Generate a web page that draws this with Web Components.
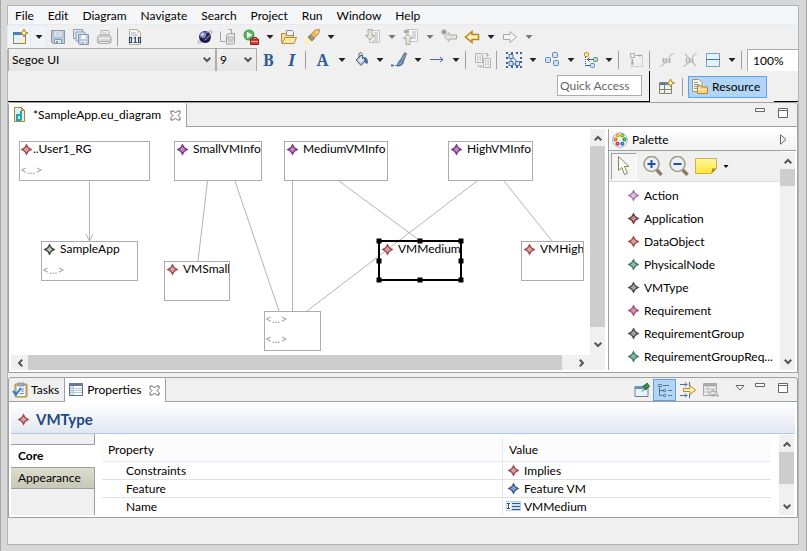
<!DOCTYPE html>
<html lang="en">
<head>
<meta charset="utf-8">
<title>SampleApp.eu_diagram</title>
<style>
  html, body { margin: 0; background: #d8d8d8; }
  body { font: 12px/16px Lato, "Open Sans", sans-serif; color: #000; }
</style>
</head>
<body>
<app-window>
  <menu-bar slot="menu"></menu-bar>
  <main-toolbar slot="tools"></main-toolbar>
  <editor-view slot="editor"></editor-view>
  <properties-view slot="properties"></properties-view>
</app-window>

<script>
const star = (edge, fill) => [13, 13,
  `<path d="M6.500 .5 8.700 4.300 12.500 6.500 8.700 8.700 6.500 12.500 4.300 8.700 .5 6.500 4.300 4.300z" fill="${edge}"/>
   <path d="M6.500 3.400 7.800 5.200 9.600 6.500 7.800 7.800 6.500 9.600 5.200 7.800 3.400 6.500 5.200 5.200z" fill="${fill}"/>`];

const ICONS = {
  'star-red': star('#a8484a', '#c9aaa8'),
  'star-darkred': star('#7e3538', '#a9a19f'),
  'star-purple': star('#84308a', '#b98fbc'),
  'star-lilac': star('#ad72b3', '#dcc6de'),
  'star-gray': star('#4d4d50', '#a7a7a7'),
  'star-olive': star('#3b443b', '#b9ccaa'),
  'star-green': star('#3c8265', '#9daea6'),
  'star-pink': star('#b84c80', '#bda0ad'),
  'star-blue': star('#3f5f8f', '#86a0c4'),
  'down': [8, 4, `<path d="M.5 0h7L4 4z" fill="#222"/>`],
  'down-dim': [8, 4, `<path d="M.5 0h7L4 4z" fill="#777"/>`],
  'chev-down': [8, 6, `<path d="M.7.8 4 4 7.300.8" fill="none" stroke="#555" stroke-width="2"/>`],
  'chev-up': [8, 6, `<path d="M.7 5.200 4 2l3.300 3.200" fill="none" stroke="#555" stroke-width="2"/>`],
  'chev-left': [6, 8, `<path d="M5.200.7 2 4l3.200 3.300" fill="none" stroke="#555" stroke-width="2"/>`],
  'chev-right': [6, 8, `<path d="M.8.7 4 4 .8 7.300" fill="none" stroke="#555" stroke-width="2"/>`],
  'new': [16, 16, `<rect x="1.500" y="3.500" width="12" height="11" fill="#fff" stroke="#8c8a5c"/><path d="M1 3h13v3H1z" fill="#4d82b4"/><path d="M2 6h11v8H2z" fill="#e4f1fc"/><path d="M5 14 13 8v6z" fill="#fff4b8"/><path d="M12 0l1.200 2.800L16 4l-2.800 1.200L12 8l-1.200-2.800L8 4l2.800-1.200z" fill="#fff3b0" stroke="#a9822c"/>`],
  'save': [16, 16, `<path d="M1.500 1.500h13v13H3l-1.500-1.500z" fill="#b9cbe0" stroke="#8496ad"/><path d="M4 2h8v6H4z" fill="#f2f4f7" stroke="#9aa8ba" stroke-width=".6"/><path d="M5.500 4h5M5.500 6h5" stroke="#a9b8c8"/><path d="M4.500 10.500h7v4h-7z" fill="#e5e9ee" stroke="#8496ad"/><path d="M6 12h2v2H6z" fill="#8496ad"/>`],
  'saveall': [16, 16, `<path d="M.5.5h9v9h-9z" fill="#dfe6ee" stroke="#8d9fb5"/><path d="M3 3h9v9H3z" fill="#dfe6ee" stroke="#8d9fb5"/><path d="M5.500 5.500h10v10h-9l-1-1z" fill="#b9cbe0" stroke="#8496ad"/><path d="M8 6h5v4H8z" fill="#f4f6f8"/><path d="M8 12h5v3H8z" fill="#e8ebef"/><path d="M9 13h1.500v2H9z" fill="#8496ad"/>`],
  'print': [16, 16, `<path d="M4.500 6 5.500 1.500h6l1.500 1V8" fill="#f7f7f7" stroke="#aaa"/><path d="M6.500 4h4M6 6h5" stroke="#bbb"/><path d="M1.500 8 4 6h9l2 2v5.500H1.500z" fill="#d6d6d4" stroke="#a5a5a5"/><path d="M3 9.500h11" stroke="#f5f5f5"/><path d="M3.500 12.500h10v2h-10z" fill="#f0f0f0" stroke="#aaa"/>`],
  'binary': [16, 16, `<path d="M2.500.5h8l3 3v12h-11z" fill="#f6f6ee" stroke="#b5b28e"/><path d="M10.500.5v3h3z" fill="#d6c27b"/><path d="M4 4h5M4 6h7" stroke="#9fb7d4"/><path d="M1 8h14v6H1z" fill="#f6f6ee"/><path d="M2.500 8.500h2v5h-2zM11.500 8.500h2v5h-2z" fill="none" stroke="#29466f" stroke-width="1.200"/><path d="M7 9.500 8.300 8.500v5M6.500 13.500h3.500" fill="none" stroke="#29466f" stroke-width="1.200"/>`],
  'globe': [16, 16, `<circle cx="8" cy="8" r="6" fill="#292763"/><circle cx="6" cy="6" r="3.200" fill="#7a7fc0"/><circle cx="5.500" cy="5.500" r="1.500" fill="#d8daf0"/><ellipse cx="8" cy="8" rx="9" ry="2.300" transform="rotate(-42 8 8)" fill="none" stroke="#a9a3a8" stroke-width=".9"/><path d="M3.600 8.500a5 5 0 0 0 9 2" fill="none" stroke="#17153f" stroke-width="1.800"/>`],
  'server': [16, 16, `<path d="M.5 2.500v10h5M8.500.5h3v4" fill="none" stroke="#a5a5a5"/><path d="M6.500 6 9 4.500h5.500V14l-1 1h-7z" fill="#e8e8e8" stroke="#a0a0a0"/><path d="M8 8h5v2H8zM8 12h5" fill="#fff" stroke="#a8a8a8"/>`],
  'run': [16, 16, `<circle cx="6" cy="6" r="5.500" fill="#3a9b48"/><circle cx="6" cy="6" r="4.500" fill="#58b560"/><path d="M4 2.800 9.500 6 4 9.200z" fill="#fff"/><path d="M7.500 10h8v5.500h-8z" fill="#d23a33" stroke="#8f211d"/><path d="M9.500 10V8.500h4V10" fill="none" stroke="#8f211d"/><path d="M8 12.500h7" stroke="#f3b2a6"/>`],
  'folder': [16, 16, `<path d="M5.500 1.500h6l1 1V8h-7z" fill="#eef3f9" stroke="#7790b3"/><path d="M.5 13.500v-9h4l1 2h7v7z" fill="#f5dc9a" stroke="#b38a3f"/><path d="M1 14.500 4 8.500h11.500l-2.500 6z" fill="#fbe6a4" stroke="#b38a3f"/>`],
  'search': [16, 16, `<path d="M0 15.500 4 8l4.500 4z" fill="#fff2a0"/><path d="M4 8.500 11 1l4.500-.5L15 4l-7 8z" fill="#eeb45a" stroke="#b98744" stroke-width=".8"/><path d="M4 8l2.500-2.500 4 4L8 12z" fill="#95928f" stroke="#777" stroke-width=".6"/><path d="M12 2.500 13.500 4" stroke="#fff2d0" stroke-width="1.500"/>`],
  'next-ann': [16, 16, `<path d="M4.500 1.500h10v12h-10z" fill="#f7f7f7" stroke="#c2c2c2"/><path d="M9 4h4M9 6h4M9 8h4M9 10h4M7 12h6" stroke="#b5b5b5"/><path d="M3 .5h4v6h2.500L5 11 .5 6.500H3z" fill="#e6e5df" stroke="#a9a89f"/>`],
  'prev-ann': [16, 16, `<path d="M3.500.5h11v12h-11z" fill="#f7f7f7" stroke="#c2c2c2"/><path d="M9 3h4M9 5h4M9 7h4M9 9h4" stroke="#b5b5b5"/><path d="M1 1h5v3H1z" fill="#aaa"/><path d="M3 15.500h4v-6h2.500L5 5 .5 9.500H3z" fill="#e6e5df" stroke="#a9a89f"/>`],
  'last-edit': [16, 16, `<path d="M15.500 6v4H8v2.500L3.500 8 8 3.500V6z" fill="#e6e5df" stroke="#aaa99f"/><path d="M3 0v6M0 3h6M1 1l4 4M5 1 1 5" stroke="#888"/>`],
  'back': [16, 16, `<path d="M14.500 5.500v5H8v3L1.500 8 8 2.500v3z" fill="#fff3b4" stroke="#b8801e" stroke-width="1.500"/>`],
  'forward': [16, 16, `<path d="M1.500 5.500v5H8v3L14.500 8 8 2.500v3z" fill="#f4f4f2" stroke="#aaa"/>`],
  'fill': [16, 16, `<path d="M3 8 8 3l5 5-5 5.500z" fill="#aebac8" stroke="#50617a"/><path d="M5 8 8 5l3 3-3 3z" fill="#e5e9ee"/><path d="M6 6V1.500l2-1 1.500 2V7" fill="none" stroke="#5d6572"/><path d="M11 5c3 0 4 3 4 6l-2 1-2-4z" fill="#3e6ea6"/>`],
  'brush': [16, 16, `<path d="M0 13h2v1H0zM4 13.500h5" stroke="#3c6ea6" stroke-width="1.200" fill="#3c6ea6"/><path d="M6 14c1-1 1-5 3.500-6l3 2C12 13 9 14 6 14z" fill="#6b9acb" stroke="#3d6393"/><path d="M9.500 8 13.500.8l2 .7-3 8z" fill="#8d9db0" stroke="#5d6b80"/>`],
  'arrow-line': [16, 16, `<path d="M1 7.500h13M11 5l3 2.500-3 2.500" fill="none" stroke="#48679a"/>`],
  'copy-style': [16, 16, `<path d="M.5 1.500h7v9h-7zM8.500 6.500h7v9h-7z" fill="#f6f6f6" stroke="#b2b2b2"/><path d="M2 4h4M2 6h4M2 8h4M10 9h4M10 11h4M10 13h4" stroke="#aaa" stroke-dasharray="1.500 1"/><path d="M9.500 1.500h3v3M11 3l1.500 1.500L14 3M3 12.500v2h3.500M5.500 13l1.500 1.500L5.500 16" fill="none" stroke="#b5b5b5"/>`],
  'select-all': [16, 16, `<path d="M0 0h2v2H0zM5 0h2v2H5zM10 0h2v2h-2zM14 0h2v2h-2zM0 5h2v2H0zM14 5h2v2h-2zM0 10h2v2H0zM14 9h2v2h-2zM0 14h2v2H0zM5 14h2v2H5zM10 14h2v2h-2zM14 14h2v2h-2z" fill="#3d608f"/><path d="M6 4 13 12M5 5v7h6" fill="none" stroke="#4a6da0"/><path d="M3 2.500h4v4H3zM3 9.500h4v4H3zM9.500 9.500h4v4h-4z" fill="#cfe3f5" stroke="#4f77a9"/>`],
  'align': [16, 16, `<rect x="1.500" y="5.500" width="5" height="5" rx="1" fill="#cfe0f3" stroke="#6686b3"/><rect x="8.500" y=".5" width="5" height="5" rx="1" fill="#cfe0f3" stroke="#6686b3"/><rect x="9.500" y="8.500" width="5" height="5" rx="1" fill="#cfe0f3" stroke="#6686b3"/>`],
  'arrange': [16, 16, `<path d="M3.500 5v10" fill="none" stroke="#3e5d86" stroke-dasharray="1 1"/><path d="M5 7.500h6M7.500 5.500l-2 2 2 2M4 13.500h4" fill="none" stroke="#3e5d86"/><rect x="2.500" y=".5" width="4" height="4" rx="1" fill="#fbe49a" stroke="#b48a2c"/><rect x="11.500" y="5.500" width="4" height="4" rx="1" fill="#b8ddb4" stroke="#5b8c6c"/><rect x="8.500" y="11.500" width="4" height="4" rx="1" fill="#cfe0f3" stroke="#6686b3"/>`],
  'autosize': [16, 16, `<path d="M3.500 3.500h11v11h-11z" fill="none" stroke="#b0b0b0" stroke-dasharray="1 1"/><path d="M2.500 1.500h4v4h-4z" fill="#f4f4f4" stroke="#aaa"/><path d="M8 3.500h6M12 2v3M4.500 7v6M3 11h3" stroke="#a5a5a5"/>`],
  'hide-lbl': [16, 16, `<path d="M1 14h2l4-4M10 5l3-3h2" fill="none" stroke="#c4c4c4" stroke-width="1.200"/><path d="M4.500 6v5M7.500 6v5M10.500 6v5" stroke="#b4b4b4" stroke-width="2"/>`],
  'no-lbl': [16, 16, `<path d="M1 14h2l4-4M10 5l3-3h2M3 2l11 12" fill="none" stroke="#bdbdbd" stroke-width="1.200"/><path d="M4.500 6v5M7.500 6v5M10.500 6v5" stroke="#b0b0b0" stroke-width="1.500"/>`],
  'compart': [16, 16, `<path d="M1.500 1.500h13v13h-13z" fill="#e3f3fc" stroke="#7c9fbd"/><path d="M1 7.500h14" stroke="#4b78a2"/>`],
  'open-persp': [16, 16, `<path d="M.5 3.500h12v11H.5z" fill="#e8f2fb" stroke="#8a835c"/><path d="M1 4h11v2H1z" fill="#4d7fae"/><path d="M5.500 6v8M1 10.500h11" stroke="#8a835c"/><path d="M11.500 0l1.200 2.800 2.800 1.200-2.800 1.200L11.500 8l-1.200-2.800L7.500 4l2.800-1.200z" fill="#fff3b0" stroke="#a9822c"/>`],
  'resource': [16, 16, `<path d="M.5.5H7l3 3v9H.5z" fill="#f8f6e8" stroke="#a89a6b"/><path d="M2 3.500h4M2 5.500h5M2 7.500h3M2 9.500h3" stroke="#7c9dc5"/><path d="M5.500 14.500v-8h3l1 1.500h6v6.500z" fill="#fbd883" stroke="#b78237"/><path d="M6 10.500h9" stroke="#fff0bb"/>`],
  'diagram-file': [16, 16, `<path d="M2.500.5h7l3 3v11h-10z" fill="#d9f1f0" stroke="#a9823b"/><path d="M9.500.5v3h3z" fill="#edc76d" stroke="#a9823b"/><path d="M9 4v9.500M9 8H5v5h4" fill="none" stroke="#20a5ac" stroke-width="2"/>`],
  'close': [11, 11, `<path d="M1 1h2.500l2 2 2-2H10v2.500l-2 2 2 2V10H7.500l-2-2-2 2H1V7.500l2-2-2-2z" fill="#fff" stroke="#666"/>`],
  'tasks': [16, 16, `<rect x="3" y="2" width="12" height="13" rx="1" fill="#dcc38d" stroke="#a48143"/><path d="M5 4h8v10H5z" fill="#eef4fb"/><path d="M6 1h6v3H6z" fill="#a0adc2" stroke="#6b7b98" stroke-width=".6"/><path d="M8 7h4M9 9h3M8 11.500h4" stroke="#7090bb"/><path d="M1 9l3 3.500L9 6" fill="none" stroke="#1b7ec9" stroke-width="2"/>`],
  'props': [16, 16, `<path d="M1.500 1.500h13v12h-13z" fill="#fff" stroke="#5a6a89"/><path d="M1 1h14v3H1z" fill="#65799f"/><path d="M2 4h3v9H2z" fill="#d5e2f2"/><path d="M5.500 4v9M2 6.500h12M2 8.500h12M2 10.500h12" stroke="#b5c5db"/>`],
  'min': [10, 4, `<path d="M.5.5h9v3h-9z" fill="#fff" stroke="#666"/>`],
  'max': [10, 10, `<path d="M.5.5h9v9h-9zM.5 2.500h9" fill="#fff" stroke="#666"/>`],
  'view-menu': [10, 6, `<path d="M1 .5h8L5 5z" fill="#fff" stroke="#666"/>`],
  'pin': [16, 16, `<path d="M1 4.500h13v10H1z" fill="#fff" stroke="#777"/><path d="M1 4h13v3H1z" fill="#5d95c4"/><path d="M2 7h11v7H2z" fill="#e6f3fb"/><path d="M8 9.500l2.500-2.500" stroke="#444"/><path d="M9 4l3 4 1-2 2.500-1.500L13 1l-2 2z" fill="#389049" stroke="#236635"/>`],
  'tree': [16, 16, `<path d="M2.500 5v8.500h3M3 8.500h3" fill="none" stroke="#4f6f93"/><path d="M1.500 2.500h3v2h-3zM6.500 7.500h2v2h-2zM6.500 12.500h2v2h-2z" fill="#d8e8f8" stroke="#5c7ea8"/><path d="M6 3.500h6M11 8.500h4M11 13.500h4" stroke="#5777a0"/>`],
  'filter': [16, 16, `<path d="M0 2.500h7M0 13.500h7M5 .5l2 2-2 2M5 11.500l2 2-2 2M9.500 0v4M9.500 12v4" fill="none" stroke="#49718f"/><path d="M3.500 6.500H10v-3L15.500 8 10 12.500v-3H3.500z" fill="#fff0bd" stroke="#c2841f"/>`],
  'restore': [16, 16, `<path d="M.5 1.500h13v12H.5z" fill="#f4f4f4" stroke="#a8a8a8"/><path d="M1 2h12v2.500H1z" fill="#aaa"/><path d="M1 7h12M1 10h12M5 5v8" stroke="#bbb"/><path d="M6.500 11 10 7.500V9.500c3 0 5 1.500 5 5.500-1.500-2-3-2.500-5-2.500v2z" fill="#e6e6e6" stroke="#999"/>`],
  'palette': [16, 16, `<circle cx="8" cy="8" r="7.400" fill="#eaf2fb" stroke="#a4bfdd"/><g stroke-width="1.500" fill="#fff"><circle cx="5.800" cy="3.500" r="1.300" stroke="#e8a900"/><circle cx="10.300" cy="3.500" r="1.300" stroke="#7eb50b"/><circle cx="3.500" cy="7.500" r="1.300" stroke="#ef6d0b"/><circle cx="12.500" cy="7.500" r="1.300" stroke="#1d9b2e"/><circle cx="5.500" cy="11.800" r="1.300" stroke="#d83030"/><circle cx="10.300" cy="11.800" r="1.300" stroke="#3067c8"/></g>`],
  'expand': [7, 11, `<path d="M.5.8 6 5.500.5 10.200z" fill="#fff" stroke="#666"/>`],
  'cursor': [16, 22, `<path d="M2.500 1.500v14l3.300-3 2.700 7 3-1.200-3-6.800H13z" fill="#fffef0" stroke="#8a855f"/>`],
  'zoom-in': [20, 20, `<path d="M12.500 12.500 18.500 19" stroke="#8e7a68" stroke-width="3.400"/><circle cx="8.500" cy="8" r="7.500" fill="#e8f1fb" stroke="#a79c7d" stroke-width="1.600"/><path d="M8.500 4v8M4.500 8h8" stroke="#2a4aa8" stroke-width="2"/>`],
  'zoom-out': [20, 20, `<path d="M12.500 12.500 18.500 19" stroke="#8e7a68" stroke-width="3.400"/><circle cx="8.500" cy="8" r="7.500" fill="#e8f1fb" stroke="#a79c7d" stroke-width="1.600"/><path d="M4.500 8h8" stroke="#2a4aa8" stroke-width="2"/>`],
  'note': [22, 16, `<defs><linearGradient id="n" x2="0" y2="1"><stop stop-color="#fff7a0"/><stop offset="1" stop-color="#ffe934"/></linearGradient></defs><path d="M.5.5h21v10l-5 5H.5z" fill="url(#n)" stroke="#c7b34c"/><path d="M16.500 15.500l.5-5 4.500 0z" fill="#a98d1c"/>`],
  'down-small': [6, 3, `<path d="M.5 0h5L3 3z" fill="#000"/>`],
  'text-field': [15, 11, `<path d="M.5.500h14v9H.5z" fill="#cfe3f2" stroke="#b7d3e8"/><path d="M1 1h4v8H1z" fill="#fff"/><path d="M2.500 2v6M1 2.500h3M1 7.500h3" stroke="#2f4d75"/><path d="M6 2.500h8M6 5.500h8M6 8.500h8" stroke="#2f5a88"/>`]
};

const BASE = `
  *, *::before, *::after { box-sizing: border-box; }
  :host { box-sizing: border-box; }
  button, input, select { font: inherit; color: inherit; margin: 0; padding: 0; border: 0; border-radius: 0; background: none; }
`;

function component(tag, css, markup) {
  customElements.define(tag, class extends HTMLElement {
    connectedCallback() {
      if (this.shadowRoot) return;
      const body = typeof markup === 'function' ? markup(this) : markup;
      const t = document.createElement('template');
      t.innerHTML = `<style>${BASE}${css}</style>${body}`;
      this.attachShadow({ mode: 'open' }).append(t.content.cloneNode(true));
    }
  });
}

component('ui-icon', `:host { display: inline-flex; flex: none; } svg { display: block; }`, el => {
  const [w, h, body] = ICONS[el.getAttribute('name')];
  return `<svg width="${w}" height="${h}" viewBox="0 0 ${w} ${h}" aria-hidden="true">${body}</svg>`;
});

component('app-window', `
  :host { display: flex; flex-direction: column; min-height: 100vh; padding: 5px 7px 6px 6px; border: solid #a8a8a8; border-width: 0 1px; }
  main { flex: 1; display: flex; flex-direction: column; background: #f0f0f0; border: 1px solid #b4b4b4; min-width: 0; }
  .editor { flex: 1; display: flex; margin-bottom: 4px; }
  ::slotted([slot=editor]) { flex: 1; }
  footer { height: 26px; }
`, `<main><slot name="menu"></slot><slot name="tools"></slot><div class="editor"><slot name="editor"></slot></div><slot name="properties"></slot><footer></footer></main>`);

component('menu-bar', `
  :host { display: block; }
  nav { display: flex; height: 19px; background: #f5f6f7; border-bottom: 1px solid #e8eaec; }
  button { padding: 0 7px; line-height: 20px; }
`, `<nav>${['File', 'Edit', 'Diagram', 'Navigate', 'Search', 'Project', 'Run', 'Window', 'Help'].map(m => `<button>${m}</button>`).join('')}</nav>`);

component('tool-button', `
  :host { display: flex; flex: none; width: 23px; height: 22px; }
  :host([name^=down]) { width: 15px; }
  :host([glyph]) { font: bold 16px/22px "Noto Serif", "Liberation Serif", serif; color: #2f5b94; }
  :host([active]) { background: #f0f4f8; outline: 1px solid #e2eaf2; }
  :host([glyph=I]) { font-style: italic; }
  button { flex: 1; display: flex; align-items: center; justify-content: center; }
`, el => {
  const g = el.getAttribute('glyph'), n = el.getAttribute('name');
  return `<button aria-label="${el.getAttribute('label') || n || g}">${g ? g : `<ui-icon name="${n}"></ui-icon>`}</button>`;
});

component('tool-separator', `
  :host { display: block; flex: none; width: 8px; height: 18px; padding-left: 2px; }
  div { width: 1px; height: 100%; background: #a0a0a0; }
`, `<div></div>`);

component('combo-box', `
  :host { display: grid; grid-template: 22px / 1fr; flex: none; border: 1px solid #acacac; border-bottom: 0; background: linear-gradient(#f0f0f0, #e5e5e5); }
  select, ui-icon { grid-area: 1 / 1; }
  select { appearance: none; width: 100%; padding-left: 3px; outline: 0; }
  ui-icon { justify-self: end; align-self: center; margin-right: 4px; pointer-events: none; }
`, el => `<select aria-label="${el.getAttribute('label')}"><option>${el.getAttribute('value')}</option></select><ui-icon name="chev-down"></ui-icon>`);

const btn = s => s.split(' ').map(n =>
  n === '|' ? '<tool-separator></tool-separator>'
  : n === 'v' ? '<tool-button name="down"></tool-button>'
  : n === 'd' ? '<tool-button name="down-dim"></tool-button>'
  : n.startsWith('=') ? `<tool-button glyph="${n[1]}"></tool-button>`
  : `<tool-button name="${n}"></tool-button>`).join('');

component('main-toolbar', `
  :host { display: block; }
  .row { display: flex; align-items: center; height: 23px; }
  .gap { width: 47px; } .gap.s { width: 23px; }
  .font { width: 208px; } .size { width: 41px; }
  .zoom { flex: 1; min-width: 0; height: 22px; border: 1px solid #acacac; border-width: 1px 0 0 1px; background: #fff; padding-left: 5px; }
  .last { height: 31px; align-items: stretch; }
  .access { flex: 1; display: flex; justify-content: flex-end; align-items: flex-start; padding: 4px 7px 0 0; border: solid #000; border-width: 0 1px 1px 0; }
  .access input { width: 85px; height: 21px; border: 1px solid #acacac; background: #fff; padding: 0 2px; }
  .access input::placeholder { color: #666; opacity: 1; }
  .persp { display: flex; align-items: center; padding: 1px 7px 0 5px; }
  .persp tool-separator { margin-left: 2px; }
  .resource { display: flex; align-items: center; gap: 4px; height: 22px; width: 79px; padding: 0 3px; background: #b3d5f5; border: 1px solid #62a2e4; }
  .end { width: 24px; border-bottom: 1px solid #000; }
`, `
  <div class="row"><tool-button name="new" active></tool-button><tool-button name="down" active></tool-button>${btn('save saveall print | binary')}<span class="gap"></span>${btn('globe server run v folder search v')}<span class="gap s"></span>${btn('next-ann d prev-ann d last-edit back v forward d')}</div>
  <div class="row"><combo-box class="font" label="Font" value="Segoe UI"></combo-box><combo-box class="size" label="Size" value="9"></combo-box>${btn('=B =I | =A v fill v brush v arrow-line v | copy-style | select-all v align v arrange v | autosize | hide-lbl no-lbl compart v |')}<input class="zoom" aria-label="Zoom" value="100%"></div>
  <div class="row last">
    <div class="access"><input aria-label="Quick Access" placeholder="Quick Access"></div>
    <div class="persp"><tool-button name="open-persp"></tool-button><tool-separator></tool-separator><button class="resource"><ui-icon name="resource"></ui-icon>Resource</button></div>
    <div class="end"></div>
  </div>`);

component('view-tab', `
  :host { display: flex; flex: none; }
  button { display: flex; align-items: center; gap: 3px; padding: 0 5px 0 3px; border-right: 1px solid #a0a0a0; height: 23px; }
  :host([selected]) button { background: #fff; border-top-right-radius: 2px; height: 24px; }
  ui-icon[name=close] { margin: 0 0 0 4px; }
  :host([icon=diagram-file]) button { gap: 5px; }
`, el => `<button role="tab" aria-selected="${el.hasAttribute('selected')}"><ui-icon name="${el.getAttribute('icon')}"></ui-icon><slot></slot>${el.hasAttribute('selected') ? '<ui-icon name="close"></ui-icon>' : ''}</button>`);

component('view-stack', `
  :host { display: flex; flex-direction: column; flex: 1; min-width: 0; border: 1px solid #a0a0a0; border-radius: 3px 3px 0 0; }
  header { display: flex; height: 24px; border-bottom: 1px solid #a0a0a0; }
  .actions { margin-left: auto; display: flex; align-items: center; }
  .body { flex: 1; display: flex; background: #fff; min-width: 0; }
`, `<header><slot name="tabs"></slot><div class="actions"><slot name="actions"></slot></div></header><div class="body"><slot></slot></div>`);

component('window-buttons', `
  :host { display: flex; gap: 13px; padding: 0 9px 3px 0; }
  button { display: flex; padding: 0; height: 10px; }
`, `<button aria-label="Minimize"><ui-icon name="min"></ui-icon></button><button aria-label="Maximize"><ui-icon name="max"></ui-icon></button>`);

component('scroll-bar', `
  :host { display: flex; flex: none; flex-direction: column; width: 15px; background: #f0f0f0; }
  :host([horizontal]) { flex-direction: row; width: auto; height: 15px; }
  button { flex: none; width: 15px; height: 17px; display: flex; align-items: center; justify-content: center; }
  :host([horizontal]) button { width: 17px; height: 15px; }
  .track { flex: 1; display: flex; flex-direction: inherit; }
  .thumb { background: #cdcdcd; }
`, el => {
  const h = el.hasAttribute('horizontal'), t = +el.getAttribute('thumb');
  return `<button aria-label="Back"><ui-icon name="${h ? 'chev-left' : 'chev-up'}"></ui-icon></button><div class="track"><div class="thumb" style="flex:${t}"></div><div style="flex:${100 - t}"></div></div><button aria-label="Forward"><ui-icon name="${h ? 'chev-right' : 'chev-down'}"></ui-icon></button>`;
});

component('diagram-node', `
  :host { position: absolute; display: block; height: 40px; border: 1px solid #acacac; }
  .clip { overflow: hidden; height: 100%; }
  .title { display: flex; align-items: center; gap: 4px; padding-left: 1px; height: 14px; line-height: 14px; white-space: nowrap; }
  :host([tight]) .title { gap: 0; padding-left: 0; }
  .slot { color: #a0a0a0; height: 20px; line-height: 14px; }
  .title + .slot { padding-top: 7px; height: 25px; }
  .frame { position: absolute; inset: -1px 0 0 -1px; outline: 2px solid #000; outline-offset: -1px; }
  i { position: absolute; width: 5px; height: 5px; background: #000; transform: translate(-50%, -50%); }
`, el => {
  const icon = el.getAttribute('icon'), n = +el.getAttribute('slots') || 0;
  const handles = el.hasAttribute('selected') ? '<div class="frame">' + [0, 50, 100].flatMap(x => [0, 50, 100].map(y => x === 50 && y === 50 ? '' : `<i style="left:${x}%;top:${y}%"></i>`)).join('') + '</div>' : '';
  return `<div class="clip">${icon ? `<div class="title"><ui-icon name="${icon}"></ui-icon><span><slot></slot></span></div>` : ''}${'<div class="slot">&lt;...&gt;</div>'.repeat(n)}</div>${handles}`;
});

const NODES = [
  [10, 14, 131, 'star-red', '..User1_RG', 'tight slots="1"'],
  [165, 14, 88, 'star-purple', 'SmallVMInfo', ''],
  [275, 14, 104, 'star-purple', 'MediumVMInfo', ''],
  [439, 14, 85, 'star-purple', 'HighVMInfo', ''],
  [32, 114, 97, 'star-olive', 'SampleApp', 'slots="1"'],
  [155, 134, 66, 'star-red', 'VMSmall', ''],
  [370, 114, 83, 'star-red', 'VMMedium', 'selected'],
  [512, 114, 63, 'star-red', 'VMHigh', ''],
  [255, 184, 57, '', '', 'slots="2"']
];

component('diagram-canvas', `
  :host { display: block; position: relative; flex: 1; min-width: 0; min-height: 226px; overflow: hidden; }
  svg { position: absolute; left: 0; top: 0; }
`, `<svg width="582" height="228" fill="none" stroke="#b4b4b4" aria-hidden="true">
    <path d="M80.500 54v60M77 107l3.500 7 3.500-7M198.500 54 189 134M226 54l44 130M283.500 54v130M330 54l80 59M468 54 298 184M495 54l48 60"/>
  </svg>${NODES.map(([x, y, w, icon, label, extra]) => `<diagram-node style="left:${x}px;top:${y}px;width:${w}px" icon="${icon}" ${extra}>${label}</diagram-node>`).join('')}`);

component('palette-view', `
  :host { display: flex; flex-direction: column; flex: none; width: 188px; border-left: 1px solid #a0a0a0; }
  header { display: flex; align-items: center; gap: 4px; height: 22px; padding: 0 9px 0 3px; background: linear-gradient(#fff, #f2f2f2); border-bottom: 1px solid #a0a0a0; }
  header button { margin-left: auto; display: flex; }
  .cols { flex: 1; display: flex; }
  .main { flex: 1; min-width: 0; }
  .tools { display: flex; align-items: center; gap: 6px; height: 31px; padding: 1px 2px; background: #f0f0f0; border-bottom: 1px solid #dcdcdc; }
  .tools button { display: flex; align-items: center; gap: 6px; }
  .tools .on { border: 1px solid; border-color: #a0a0a0 #fff #fff #a0a0a0; background: #f5f5f5; width: 26px; height: 27px; justify-content: center; }
  ul { list-style: none; margin: 0; padding: 2px 0 0 18px; }
  li { height: 23px; display: flex; }
  li button { display: flex; align-items: center; gap: 4px; white-space: nowrap; }
  scroll-bar { margin: 1px 1px 0 0; }
`, `
  <header><ui-icon name="palette"></ui-icon><span>Palette</span><button aria-label="Hide palette"><ui-icon name="expand"></ui-icon></button></header>
  <div class="cols"><div class="main">
    <div class="tools"><button class="on" aria-label="Select"><ui-icon name="cursor"></ui-icon></button><button aria-label="Zoom in"><ui-icon name="zoom-in"></ui-icon></button><button aria-label="Zoom out"><ui-icon name="zoom-out"></ui-icon></button><button aria-label="Note"><ui-icon name="note"></ui-icon><ui-icon name="down-small"></ui-icon></button></div>
    <ul>${[['lilac', 'Action'], ['darkred', 'Application'], ['red', 'DataObject'], ['green', 'PhysicalNode'], ['gray', 'VMType'], ['pink', 'Requirement'], ['gray', 'RequirementGroup'], ['green', 'RequirementGroupReq...']].map(([c, t]) => `<li><button><ui-icon name="star-${c}"></ui-icon>${t}</button></li>`).join('')}</ul>
  </div><scroll-bar thumb="9"></scroll-bar></div>`);

component('editor-view', `
  :host { display: flex; min-width: 0; }
  .edit { flex: 1; display: flex; min-width: 0; }
  .left { flex: 1; display: flex; flex-direction: column; min-width: 0; }
  .side { display: flex; flex-direction: column; margin: 2px 3px 2px 0; background: #f0f0f0; }
  .side scroll-bar { flex: 1; }
  .corner { height: 17px; }
  scroll-bar[horizontal] { margin: 0 0 2px 2px; }
  palette-view { margin: 2px 1px 2px 0; }
`, `<view-stack>
  <view-tab slot="tabs" icon="diagram-file" selected>*SampleApp.eu_diagram</view-tab>
  <window-buttons slot="actions"></window-buttons>
  <div class="edit">
    <div class="left"><diagram-canvas></diagram-canvas><scroll-bar horizontal thumb="98"></scroll-bar></div>
    <div class="side"><scroll-bar thumb="95"></scroll-bar><div class="corner"></div></div>
    <palette-view></palette-view>
  </div></view-stack>`);

component('properties-view', `
  :host { display: flex; }
  .acts { display: flex; align-items: center; }
  .acts .on { background: #b3d5f5; outline: 1px solid #62a2e4; outline-offset: -1px; }
  .menu { display: flex; padding: 0 10px 3px 13px; }
  .wrap { flex: 1; padding: 1px 2px 2px; min-width: 0; }
  h1 { display: flex; align-items: center; gap: 6px; margin: 0; height: 31px; padding: 2px 0 0 6px; font-size: 15px; line-height: 20px; color: #1c4a83; background: linear-gradient(#fff, #e1e8f2); border-bottom: 1px solid #b3c8de; }
  .cols { display: flex; height: 81px; }
  .sections { width: 84px; display: flex; flex-direction: column; background: #f0f0f0; border-right: 1px solid #a0a0a0; }
  .sections::before { content: ""; height: 11px; border-bottom: 1px solid #a0a0a0; }
  .sections button { text-align: left; padding-left: 7px; }
  .sections .cur { font-weight: bold; background: #fff; height: 22px; margin-right: -1px; }
  .sections .alt { height: 22px; background: linear-gradient(#dcdccc, #c8c8b8); border: solid #a0a0a0; border-width: 1px 0; }
  .table { flex: 1; min-width: 0; padding: 4px 8px 0 7px; overflow: hidden; }
  table { width: 100%; table-layout: fixed; border-collapse: separate; border-spacing: 0; }
  th, td { text-align: left; font-weight: normal; padding: 0 6px; height: 18px; line-height: 17px; border-bottom: 1px solid #e0e0e0; }
  th { height: 24px; line-height: 23px; background: #fcfcfc; border-color: #e3ecf7; }
  th + th, td + td { border-left: 1px solid #e3e6ea; }
  td:first-child { padding-left: 24px; }
  td + td { padding-left: 3px; }
  td div { display: flex; align-items: center; gap: 3px; height: 17px; }
  td span { display: flex; width: 15px; justify-content: center; }
  th:first-child { width: 400px; }
  scroll-bar { margin: 1px 1px 0 0; }
`, `<view-stack>
  <view-tab slot="tabs" icon="tasks">Tasks</view-tab>
  <view-tab slot="tabs" icon="props" selected>Properties</view-tab>
  <div class="acts" slot="actions">${btn('pin')}<tool-button class="on" name="tree"></tool-button>${btn('filter restore')}<button class="menu" aria-label="View menu"><ui-icon name="view-menu"></ui-icon></button><window-buttons></window-buttons></div>
  <div class="wrap">
    <h1><ui-icon name="star-red"></ui-icon>VMType</h1>
    <div class="cols">
      <div class="sections" role="tablist"><button class="cur" role="tab" aria-selected="true">Core</button><button class="alt" role="tab" aria-selected="false">Appearance</button></div>
      <div class="table"><table>
        <thead><tr><th>Property</th><th>Value</th></tr></thead>
        <tbody>${[['Constraints', 'star-red', 'Implies'], ['Feature', 'star-blue', 'Feature VM'], ['Name', 'text-field', 'VMMedium']].map(([p, i, v]) => `<tr><td>${p}</td><td><div><span><ui-icon name="${i}"></ui-icon></span>${v}</div></td></tr>`).join('')}</tbody>
      </table></div>
      <scroll-bar thumb="69"></scroll-bar>
    </div>
  </div></view-stack>`);
</script>
</body>
</html>
